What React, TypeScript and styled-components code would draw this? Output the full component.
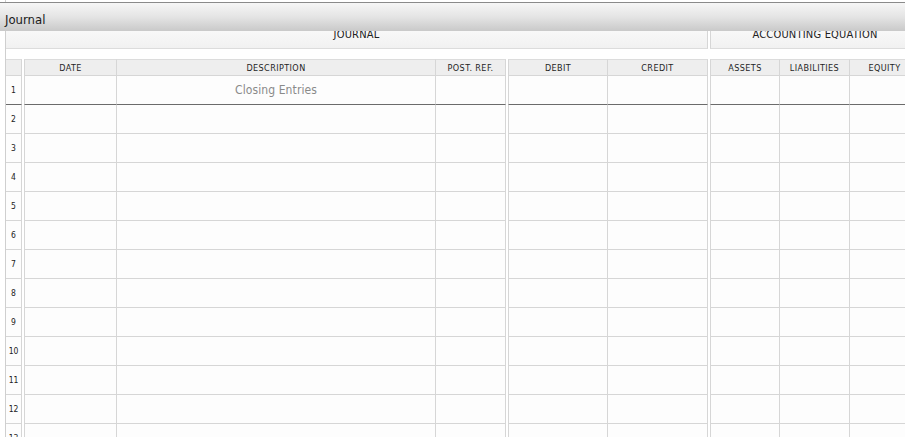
import React from "react";
import styled, { createGlobalStyle, css } from "styled-components";

const Global = createGlobalStyle`
  html, body { margin: 0; padding: 0; background: #ffffff; overflow: hidden; }
  body { font-family: "DejaVu Sans Condensed", "DejaVu Sans", sans-serif; }
`;

const Page = styled.div`
  position: relative;
  width: 905px;
  height: 437px;
  overflow: hidden;
  background: #ffffff;
`;

const TitleBar = styled.div`
  position: absolute;
  top: 2px;
  left: 0;
  right: 0;
  height: 29px;
  box-sizing: border-box;
  border-top: 1px solid #8a8a8a;
  background: linear-gradient(to bottom, #f6f6f6 0%, #e4e4e4 50%, #c9c9c9 100%);
  display: flex;
  align-items: flex-end;
  padding: 0 0 4px 5px;
  font-size: 13px;
  line-height: 15px;
  color: #1a1a1a;
  z-index: 2;
`;

const Sheet = styled.div`
  margin-left: 5px;
  padding-top: 26px;
  border-left: 1px solid #cfcfcf;
  width: 940px;
  background: #ffffff;
`;

const Band = styled.div`
  display: flex;
  height: 23px;
`;

const BandSection = styled.div<{ $w: number; $gap?: boolean }>`
  width: ${(p) => p.$w}px;
  box-sizing: border-box;
  flex: none;
  background: linear-gradient(to bottom, #fafafa, #f1f1f1);
  border-bottom: 1px solid #dcdcdc;
  border-right: 1px solid #d6d6d6;
  ${(p) =>
    p.$gap &&
    css`
      margin-left: 2px;
      border-left: 1px solid #d6d6d6;
    `}
  text-align: center;
  font-size: 11px;
  line-height: 12px;
  padding-top: 3px;
  color: #222;
  letter-spacing: 0.2px;
`;

const Spacer = styled.div`
  height: 10px;
`;

const Row = styled.div<{ $h: number }>`
  display: flex;
  height: ${(p) => p.$h}px;
`;

const Cell = styled.div<{ $w: number; $gap?: boolean; $head?: boolean; $dark?: boolean }>`
  width: ${(p) => p.$w}px;
  flex: none;
  box-sizing: border-box;
  border-right: 1px solid #d6d6d6;
  border-bottom: 1px solid ${(p) => (p.$dark ? "#6b6b6b" : "#d6d6d6")};
  ${(p) =>
    p.$gap &&
    css`
      margin-left: 2px;
      border-left: 1px solid #d6d6d6;
    `}
  ${(p) =>
    p.$head &&
    css`
      border-top: 1px solid #dcdcdc;
      font-size: 9px;
      letter-spacing: 0.4px;
      color: #1e1e1e;
    `}
  background: ${(p) => (p.$head ? "#eeeeee" : "#fdfdfd")};
  display: flex;
  align-items: center;
  justify-content: center;
  overflow: hidden;
  white-space: nowrap;
`;

const NumCell = styled(Cell)`
  font-size: 8.5px;
  color: #222;
`;

const Entry = styled.span`
  font-size: 12px;
  color: #8a8a8a;
  letter-spacing: 0.1px;
`;

const cols = [
  { key: "date", label: "DATE", w: 93, gap: true },
  { key: "desc", label: "DESCRIPTION", w: 319 },
  { key: "ref", label: "POST. REF.", w: 70 },
  { key: "debit", label: "DEBIT", w: 100, gap: true },
  { key: "credit", label: "CREDIT", w: 100 },
  { key: "assets", label: "ASSETS", w: 70, gap: true },
  { key: "liab", label: "LIABILITIES", w: 70 },
  { key: "equity", label: "EQUITY", w: 70 },
];

const rows = Array.from({ length: 13 }, (_, i) => i + 1);

export default function App() {
  return (
    <Page>
      <Global />
      <TitleBar>Journal</TitleBar>
      <Sheet>
        <Band>
          <BandSection $w={702}>JOURNAL</BandSection>
          <BandSection $w={210} $gap>
            ACCOUNTING EQUATION
          </BandSection>
        </Band>
        <Spacer />
        <Row $h={17}>
          <Cell $w={16} $head />
          {cols.map((c) => (
            <Cell key={c.key} $w={c.w} $gap={c.gap} $head>
              {c.label}
            </Cell>
          ))}
        </Row>
        {rows.map((r) => (
          <Row key={r} $h={29}>
            <NumCell $w={16} $dark={r === 1}>
              {r}
            </NumCell>
            {cols.map((c) => (
              <Cell key={c.key} $w={c.w} $gap={c.gap} $dark={r === 1}>
                {r === 1 && c.key === "desc" ? <Entry>Closing Entries</Entry> : null}
              </Cell>
            ))}
          </Row>
        ))}
      </Sheet>
    </Page>
  );
}
